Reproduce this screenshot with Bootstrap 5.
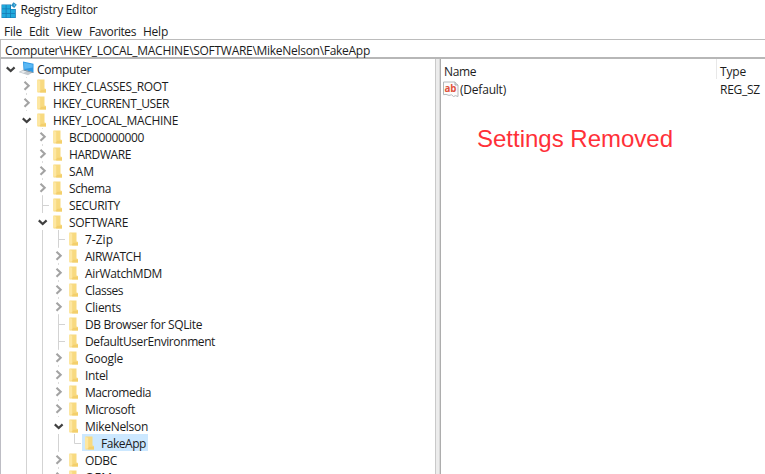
<!DOCTYPE html>
<html lang="en">
<head>
<meta charset="utf-8">
<title>Registry Editor</title>
<link href="https://cdn.jsdelivr.net/npm/bootstrap@5.3.0/dist/css/bootstrap.min.css" rel="stylesheet">
<style>
  body { font-family: "Open Sans", "Noto Sans", sans-serif; font-size: 12px; line-height: 17px; color: #1c1c1c; }
  svg { flex: none; display: block; }
  .fit { white-space: pre; }
  .title-row { height: 20px; padding-left: 1px; }
  .title-row .fit { margin: 0 0 0 2.500px; }
  .menu-row { height: 20px; padding: 4px 0 0 4px; gap: 7px; }
  .address { height: 20px; border-top: 1px solid #bcbcbc; border-left: 1px solid #bcbcbc; border-bottom: 2px solid #b7b7b7; padding: 2px 0 0 4px; }
  .address .fit { display: block; width: max-content; line-height: 17px; }
  .tree-pane { width: 436px; padding-top: 1px; border-left: 1px solid #bdbdc4; border-right: 1px solid #c9c9c9; }
  .splitter { width: 4px; background: #ececec; border-right: 1px solid #d8d8d8; }
  .value-pane { border-left: 1px solid #adadad; }
  .tree-row { height: 17px; }
  .tree-row .fit { line-height: 19px; }
  .cell { width: 16px; height: 17px; flex: none; }
  .thin-gap { width: 1px; flex: none; }
  .label-part { height: 17px; padding-right: 2px; }
  .picked { background: #cce8ff; }
  .head-row { height: 20px; }
  .col-name { width: 276px; height: 20px; padding: 4px 0 0 3px; border-right: 1px solid #e8e8e8; flex: none; }
  .col-type { padding: 4px 0 0 3px; }
  .val-row { height: 19px; padding-top: 1px; }
  .val-name { width: 276px; padding-left: 1px; flex: none; }
  .val-type { padding: 1px 0 0 3px; }
  .val-name .fit { margin-top: 1px; }
  .notice { font-family: "Liberation Sans", Arial, sans-serif; font-size: 24px; line-height: 28px; color: #ff3038; margin: 27px 0 0 36px; }
</style>
</head>
<body class="bg-white vh-100 overflow-hidden d-flex flex-column">
<svg width="0" height="0" class="position-absolute">
  <symbol id="folder" viewBox="0 0 16 17">
    <path d="M2.500 2.500h7v9l1.500.500v3.500H2.500z" fill="#f8da80"/>
    <path d="M2 2.700l3.200 1v10.500l-3.200.8z" fill="#fde7a2"/>
    <path d="M5.200 14.200l1-1.500H11v2.800H5.200z" fill="#f3cf6c"/>
  </symbol>
  <symbol id="pc" viewBox="0 0 16 17">
    <path d="M4 1.500l10.500 2.200v8.800L4.500 9.800z" fill="#2c98e4"/>
    <path d="M5 2.700l8.700 1.900v3L5.300 9z" fill="#5ab8f4"/>
    <path d="M-.5 12l5-2.500 9.500 2.800-5 3z" fill="#c3c9ce"/>
    <path d="M1.500 11.900l3-1.500 3 .9-3 1.600z" fill="#e8ebed"/>
    <path d="M4.500 9.400l10 2.800v.9l-10-2.700z" fill="#71899a"/>
  </symbol>
</svg>

<header class="title-row d-flex align-items-center">
  <svg width="17" height="18" viewBox="0 0 17 18">
    <path d="M.5 3.500h9.500v4.500h4.800v9H.5z" fill="#1479b4"/>
    <path d="M1 4h3.700v3.500H1zM5.500 4h3.700v3.500H5.500zM1 8.300h3.700v3.700H1zM5.500 8.300h3.700v3.700H5.500zM10 8.600h4v3.400h-4zM1 12.800h3.700v3.700H1zM5.500 12.800h3.700v3.700H5.500zM10 12.800h4v3.700h-4z" fill="#20a9dc"/>
    <path d="M12.500 1.200l3.300 2.600-2.600 3.200-3.200-2.500z" fill="#2b8fc4"/>
    <path d="M12.700 2.400l1.800 1.500-1.600 1.700z" fill="#62c4e8"/>
  </svg>
  <span class="fit" data-w="77">Registry Editor</span>
</header>
<nav class="menu-row d-flex align-items-center">
  <span class="fit" data-w="18">File</span><span class="fit" data-w="20">Edit</span><span class="fit" data-w="26">View</span><span class="fit" data-w="47">Favorites</span><span class="fit" data-w="25">Help</span>
</nav>
<div class="address"><span class="fit" data-w="365">Computer\HKEY_LOCAL_MACHINE\SOFTWARE\MikeNelson\FakeApp</span></div>

<main class="d-flex flex-grow-1 overflow-hidden">
  <section class="tree-pane flex-shrink-0 overflow-hidden" id="tree"></section>
  <div class="splitter flex-shrink-0"></div>
  <section class="value-pane flex-grow-1 overflow-hidden">
    <div class="head-row d-flex"><div class="col-name"><span class="fit" data-w="32">Name</span></div><div class="col-type"><span class="fit" data-w="26">Type</span></div></div>
    <div class="val-row d-flex">
      <div class="val-name d-flex align-items-center">
        <svg width="18" height="17" viewBox="0 0 18 17">
          <path d="M1.500 1h11.500l3 3v11.500l-2.500-.8-2 .8-2-1.700-2.500.6-3-1-2.500.3z" fill="#fcfcfc" stroke="#b4b8bb"/>
          <path d="M13 1v3h3" fill="#ddd" stroke="#a9adb0"/>
          <text x="2.500" y="11" font-family="Open Sans" font-size="11" font-weight="700" fill="#e0523a" textLength="12" lengthAdjust="spacingAndGlyphs">ab</text>
        </svg>
        <span class="fit" data-w="46">(Default)</span>
      </div>
      <div class="val-type"><span class="fit" data-w="40">REG_SZ</span></div>
    </div>
    <div class="notice"><span class="fit" data-w="196">Settings Removed</span></div>
  </section>
</main>

<script src="https://cdn.jsdelivr.net/npm/bootstrap@5.3.0/dist/js/bootstrap.bundle.min.js"></script>
<script>
  // depth, state (o open, c closed, l leaf, e last leaf), label, label width
  const rows = [
    [0,'o','Computer',54],[1,'c','HKEY_CLASSES_ROOT',115],[1,'c','HKEY_CURRENT_USER',116],[1,'o','HKEY_LOCAL_MACHINE',125],
    [2,'c','BCD00000000',75],[2,'c','HARDWARE',62],[2,'c','SAM',25],[2,'c','Schema',42],[2,'l','SECURITY',51],[2,'o','SOFTWARE',59],
    [3,'l','7-Zip',28],[3,'c','AIRWATCH',56],[3,'c','AirWatchMDM',77],[3,'c','Classes',38],[3,'c','Clients',36],
    [3,'l','DB Browser for SQLite',117],[3,'l','DefaultUserEnvironment',130],[3,'c','Google',38],[3,'c','Intel',23],
    [3,'c','Macromedia',66],[3,'c','Microsoft',50],[3,'o','MikeNelson',63],[4,'e','FakeApp',45],[3,'c','ODBC',32],[3,'c','OEM',27]
  ];
  const cell = body => `<svg class="cell" viewBox="0 0 16 17">${body}</svg>`;
  const guide = '<path d="M9.500 0v17" stroke="#d3d3d3"/>';
  const marks = {
    o: '<path d="M5.800 7.400l3.900 3.600 3.900-3.600" fill="none" stroke="#404040" stroke-width="2.200"/>',
    c: '<path d="M9.500 0v1M9.500 16v1" stroke="#dcdcdc"/><path d="M7.500 4.700l4.200 4-4.200 4" fill="none" stroke="#a3a3a3" stroke-width="2.100"/>',
    l: '<path d="M9.500 0v17M9.500 9.500h6.500" stroke="#d3d3d3" fill="none"/>',
    e: '<path d="M9.500 0v9.500h6.500" stroke="#d3d3d3" fill="none"/>'
  };
  document.getElementById('tree').innerHTML = rows.map(([d, s, t, w]) => {
    let lead = '';
    for (let i = 0; i < d; i++) lead += cell(i ? guide : '');
    const gap = '<span class="thin-gap"></span>';
    const icon = cell(`<use href="#${d ? 'folder' : 'pc'}"/>`);
    return `<div class="tree-row d-flex">${lead}${cell(marks[s])}${gap}<div class="label-part d-flex${s === 'e' ? ' picked' : ''}">${gap}${icon}${gap}${gap}<span class="fit" data-w="${w}">${t}</span></div></div>`;
  }).join('');
  // Spread each label's letters over its nominal width
  document.querySelectorAll('.fit').forEach(el => {
    el.style.letterSpacing = '0px';
    const n = el.textContent.length;
    el.style.letterSpacing = ((+el.dataset.w - el.getBoundingClientRect().width) / n).toFixed(3) + 'px';
  });
</script>
</body>
</html>
